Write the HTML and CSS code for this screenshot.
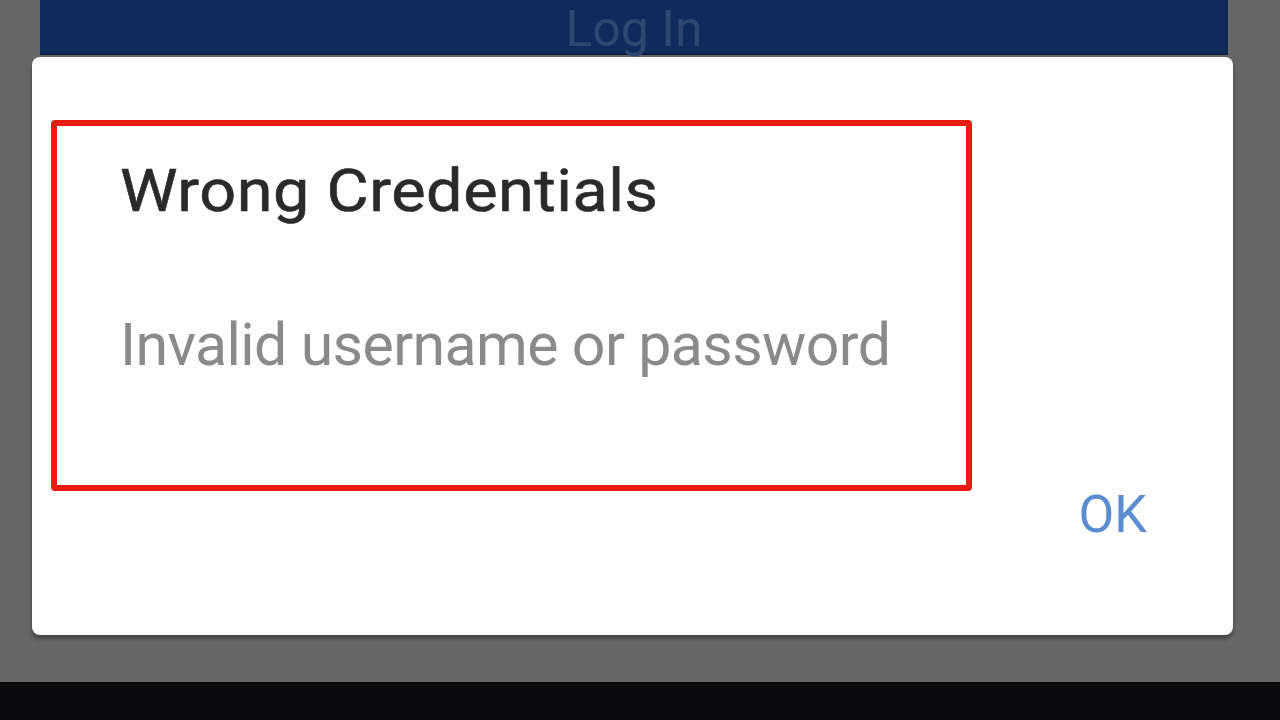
FILE: index.html
```html
<!DOCTYPE html>
<html>
<head>
<meta charset="utf-8">
<link rel="stylesheet" href="styles.css">
</head>
<body>
<div class="screen">
  <div class="topbar"><span class="topbar-label">Log In</span></div>
  <div class="dialog">
    <div class="highlight">
      <div class="title">Wrong Credentials</div>
      <div class="message">Invalid username or password</div>
    </div>
    <div class="actions"><span class="ok">OK</span></div>
  </div>
</div>
<div class="bottom"></div>
</body>
</html>
```
FILE: styles.css
```css
* { box-sizing: border-box; }
html, body { margin: 0; padding: 0; }
body {
  width: 1280px;
  height: 720px;
  overflow: hidden;
  background: #0a090b;
  font-family: Roboto, "Noto Sans", sans-serif;
}
.screen {
  height: 682px;
  background: #676767;
  display: flex;
  flex-direction: column;
}
.topbar {
  height: 55px;
  margin: 0 52px 0 40px;
  background: #0f2a5b;
  border-bottom: 2px solid #0b1f44;
  display: flex;
  justify-content: center;
  align-items: flex-start;
}
.topbar-label {
  font-size: 50px;
  line-height: 58px;
  height: 53px;
  color: #2f4670;
  overflow: visible;
}
.dialog {
  margin: 2px 47px 0 32px;
  height: 578px;
  background: #ffffff;
  border-radius: 8px;
  box-shadow: 0 4px 4px rgba(0,0,0,0.35);
  display: flex;
  flex-direction: column;
}
.highlight {
  margin: 63px 0 0 19px;
  width: 921px;
  height: 371px;
  border: 6px solid #ea1a10;
  border-radius: 4px;
  padding: 30px 0 0 63px;
}
.title {
  font-size: 60px;
  line-height: 70px;
  color: #2a2a2a;
  letter-spacing: 0.5px;
  -webkit-text-stroke: 0.6px #2a2a2a;
  transform: scaleX(1.08);
  transform-origin: left center;
}
.message {
  margin-top: 84px;
  font-size: 59px;
  line-height: 70px;
  color: #8a8a8a;
  letter-spacing: -0.6px;
}
.actions {
  display: flex;
  justify-content: flex-end;
  padding-right: 86px;
  margin-top: -6px;
}
.ok {
  font-size: 52px;
  line-height: 60px;
  color: #5a8dd0;
}
.bottom {
  height: 38px;
  background: #0a090b;
}
```
